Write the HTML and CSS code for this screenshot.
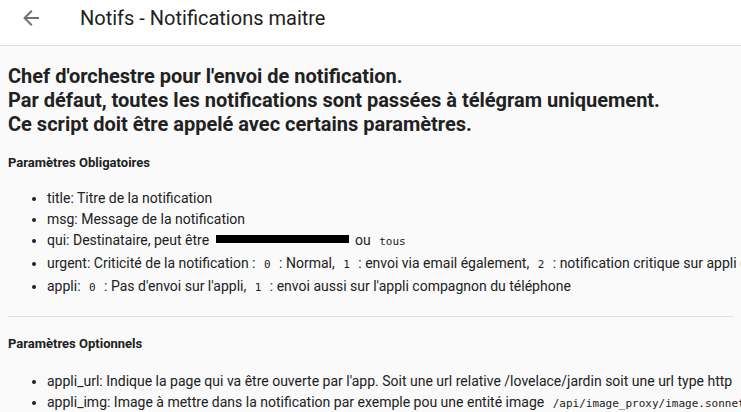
FILE: index.html
```html
<!DOCTYPE html>
<html lang="fr">
<head>
<meta charset="utf-8">
<title>Notifs - Notifications maitre</title>
<link rel="stylesheet" href="styles.css">
</head>
<body>
<header class="toolbar">
  <span class="back">
    <svg viewBox="0 0 24 24" width="24" height="24"><path d="M20,11V13H8L13.5,18.5L12.08,19.92L4.16,12L12.08,4.08L13.5,5.5L8,11H20Z"/></svg>
  </span>
  <div class="title">Notifs - Notifications maitre</div>
</header>
<main class="content">
  <h3 class="intro">Chef d'orchestre pour l'envoi de notification.<br>Par défaut, toutes les notifications sont passées à télégram uniquement.<br>Ce script doit être appelé avec certains paramètres.</h3>
  <h5 class="section">Paramètres Obligatoires</h5>
  <ul class="params">
    <li>title: Titre de la notification</li>
    <li>msg: Message de la notification</li>
    <li>qui: Destinataire, peut être <span class="redacted"></span> ou <code>tous</code></li>
    <li>urgent: Criticité de la notification : <code>0</code> : Normal, <code>1</code> : envoi via email également, <code>2</code> : notification critique sur appli (</li>
    <li>appli: <code>0</code> : Pas d'envoi sur l'appli, <code>1</code> : envoi aussi sur l'appli compagnon du téléphone</li>
  </ul>
  <hr class="sep">
  <h5 class="section">Paramètres Optionnels</h5>
  <ul class="params">
    <li>appli_url: Indique la page qui va être ouverte par l'app. Soit une url relative /lovelace/jardin soit une url type http</li>
    <li>appli_img: Image à mettre dans la notification par exemple pou une entité image <code>/api/image_proxy/image.sonnet</code></li>
  </ul>
</main>
</body>
</html>
```
FILE: styles.css
```css
html, body {
  margin: 0;
  padding: 0;
  background: #fafafa;
  color: #212121;
  font-family: Roboto, "Noto Sans", sans-serif;
  overflow: hidden;
}
.toolbar {
  display: flex;
  align-items: center;
  height: 45px;
  background: #ffffff;
  border-bottom: 1px solid #e0e0e0;
  box-sizing: content-box;
}
.back {
  display: flex;
  width: 24px;
  height: 24px;
  margin-left: 19px;
  margin-top: -9px;
}
.back svg {
  fill: #727272;
}
.title {
  margin-left: 37px;
  margin-top: -9px;
  font-size: 20px;
  font-weight: 400;
  color: #212121;
  white-space: nowrap;
}
.content {
  padding: 18px 8px 0 8px;
  white-space: nowrap;
}
.intro {
  margin: 0;
  font-size: 20px;
  line-height: 24px;
  font-weight: 700;
}
.section {
  margin: 19px 0 0 0;
  font-size: 13px;
  line-height: 16px;
  font-weight: 700;
}
.params {
  margin: 17px 0 0 0;
  padding-left: 39px;
  font-size: 14px;
  line-height: 21px;
}
.params li {
  margin: 0;
}
code {
  font-family: "DejaVu Sans Mono", "Liberation Mono", monospace;
  font-size: 11px;
  line-height: 23px;
  padding: 0 5px;
  color: #212121;
}
.redacted {
  display: inline-block;
  width: 133px;
  height: 8px;
  background: #000;
  vertical-align: 2px;
  margin: 0 3px;
}
.sep {
  margin: 17px 0 0 0;
  border: 0;
  border-top: 1px solid #e0e0e0;
  height: 0;
}
.sep + .section {
  margin-top: 19px;
}
.sep + .section + .params {
  margin-top: 19px;
}
```
